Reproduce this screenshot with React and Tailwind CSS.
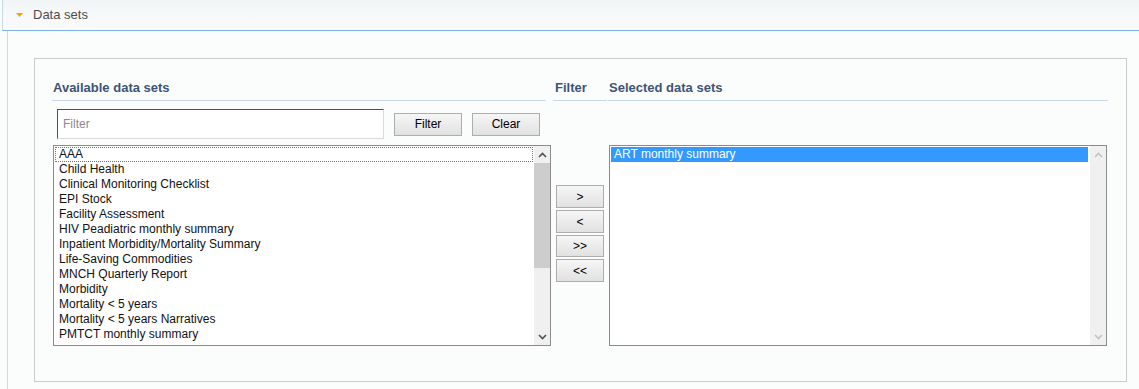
import React from 'react';

const available = [
  'AAA',
  'Child Health',
  'Clinical Monitoring Checklist',
  'EPI Stock',
  'Facility Assessment',
  'HIV Peadiatric monthly summary',
  'Inpatient Morbidity/Mortality Summary',
  'Life-Saving Commodities',
  'MNCH Quarterly Report',
  'Morbidity',
  'Mortality < 5 years',
  'Mortality < 5 years Narratives',
  'PMTCT monthly summary',
];

function Scrollbar({ disabled }) {
  const arrow = disabled ? '#c3c3c3' : '#505050';
  return (
    <div className="w-[16px] h-full bg-[#f0f0f0] flex flex-col">
      <div className="h-[17px] flex items-center justify-center">
        <svg width="9" height="6" viewBox="0 0 9 6">
          <path d="M1 5 L4.5 1.5 L8 5" fill="none" stroke={arrow} strokeWidth="1.6" />
        </svg>
      </div>
      <div className="flex-1 flex flex-col">
        {!disabled && <div className="h-[105px] bg-[#cdcdcd]" />}
      </div>
      <div className="h-[17px] flex items-center justify-center">
        <svg width="9" height="6" viewBox="0 0 9 6">
          <path d="M1 1 L4.5 4.5 L8 1" fill="none" stroke={arrow} strokeWidth="1.6" />
        </svg>
      </div>
    </div>
  );
}

function Btn({ children, className = '' }) {
  return (
    <button
      className={`border border-[#adadad] bg-gradient-to-b from-[#f6f6f6] to-[#e1e1e1] text-[12px] text-black leading-none ${className}`}
    >
      {children}
    </button>
  );
}

export default function App() {
  return (
    <div className="w-[1139px] h-[389px] bg-[#fbfcfc] overflow-hidden font-['Liberation_Sans',Arial,sans-serif]">
      <header className="ml-[2px] h-[31px] border-l border-b border-l-[#c3d9ee] border-b-[#7db4e2] bg-gradient-to-b from-[#f2f5f7] to-[#fafbfb] flex items-center">
        <svg width="7" height="4" viewBox="0 0 7 4" className="ml-[13px] mt-[-1px]">
          <path d="M0 0 H7 L3.5 4 Z" fill="#f0a800" />
        </svg>
        <span className="ml-[10px] text-[13px] text-[#4d4d4d]">Data sets</span>
      </header>

      <div className="ml-[7px] h-[358px] border-l border-[#c8dbee] pl-[26px] pt-[27px]">
        <div className="w-[1093px] h-[324px] border border-[#cccccc] bg-[#fbfcfc] pt-[20px]">
          {/* headings */}
          <div className="flex text-[13px] font-bold text-[#3f5474] leading-[18px]">
            <div className="ml-[17px] w-[494px] pl-[1px] pb-[3px] border-b border-[#c9d7e8]">Available data sets</div>
            <div className="ml-[7px] w-[54px] pl-[2px] pb-[3px] border-b border-[#c9d7e8]">Filter</div>
            <div className="ml-[1px] w-[500px] pl-[1px] pb-[3px] border-b border-[#c9d7e8]">Selected data sets</div>
          </div>

          {/* filter row */}
          <div className="mt-[8px] ml-[22px] flex items-center gap-[10px]">
            <div className="w-[327px] h-[30px] border border-[#dadada] border-t-[#505050] border-l-[#505050] bg-white flex items-center pl-[5px] text-[12px] text-[#8a8a8a]">
              Filter
            </div>
            <Btn className="w-[68px] h-[23px]">Filter</Btn>
            <Btn className="w-[68px] h-[23px]">Clear</Btn>
          </div>

          {/* lists */}
          <div className="mt-[6px] ml-[18px] flex items-start">
            <div className="w-[498px] h-[201px] border border-[#8a8a8f] bg-white flex">
              <div className="flex-1 p-[1px] overflow-hidden text-[12px] leading-[15px] text-[#111]">
                {available.map((d, i) => (
                  <div
                    key={d}
                    className={`h-[15px] px-[4px] whitespace-nowrap ${i === 0 ? 'outline outline-1 outline-dotted outline-[#3b7fd6] -outline-offset-1' : ''}`}
                  >
                    {d}
                  </div>
                ))}
              </div>
              <Scrollbar />
            </div>

            <div className="ml-[5px] mt-[40px] w-[48px] flex flex-col gap-[2px]">
              <Btn className="h-[23px]">&gt;</Btn>
              <Btn className="h-[23px]">&lt;</Btn>
              <Btn className="h-[22px]">&gt;&gt;</Btn>
              <Btn className="h-[23px]">&lt;&lt;</Btn>
            </div>

            <div className="ml-[5px] w-[498px] h-[201px] border border-[#8a8a8f] bg-white flex">
              <div className="flex-1 p-[1px] pr-[2px] overflow-hidden text-[12px] leading-[15px]">
                <div className="h-[15px] px-[3px] bg-[#3399ff] text-white whitespace-nowrap">ART monthly summary</div>
              </div>
              <Scrollbar disabled />
            </div>
          </div>
        </div>
      </div>
    </div>
  );
}
